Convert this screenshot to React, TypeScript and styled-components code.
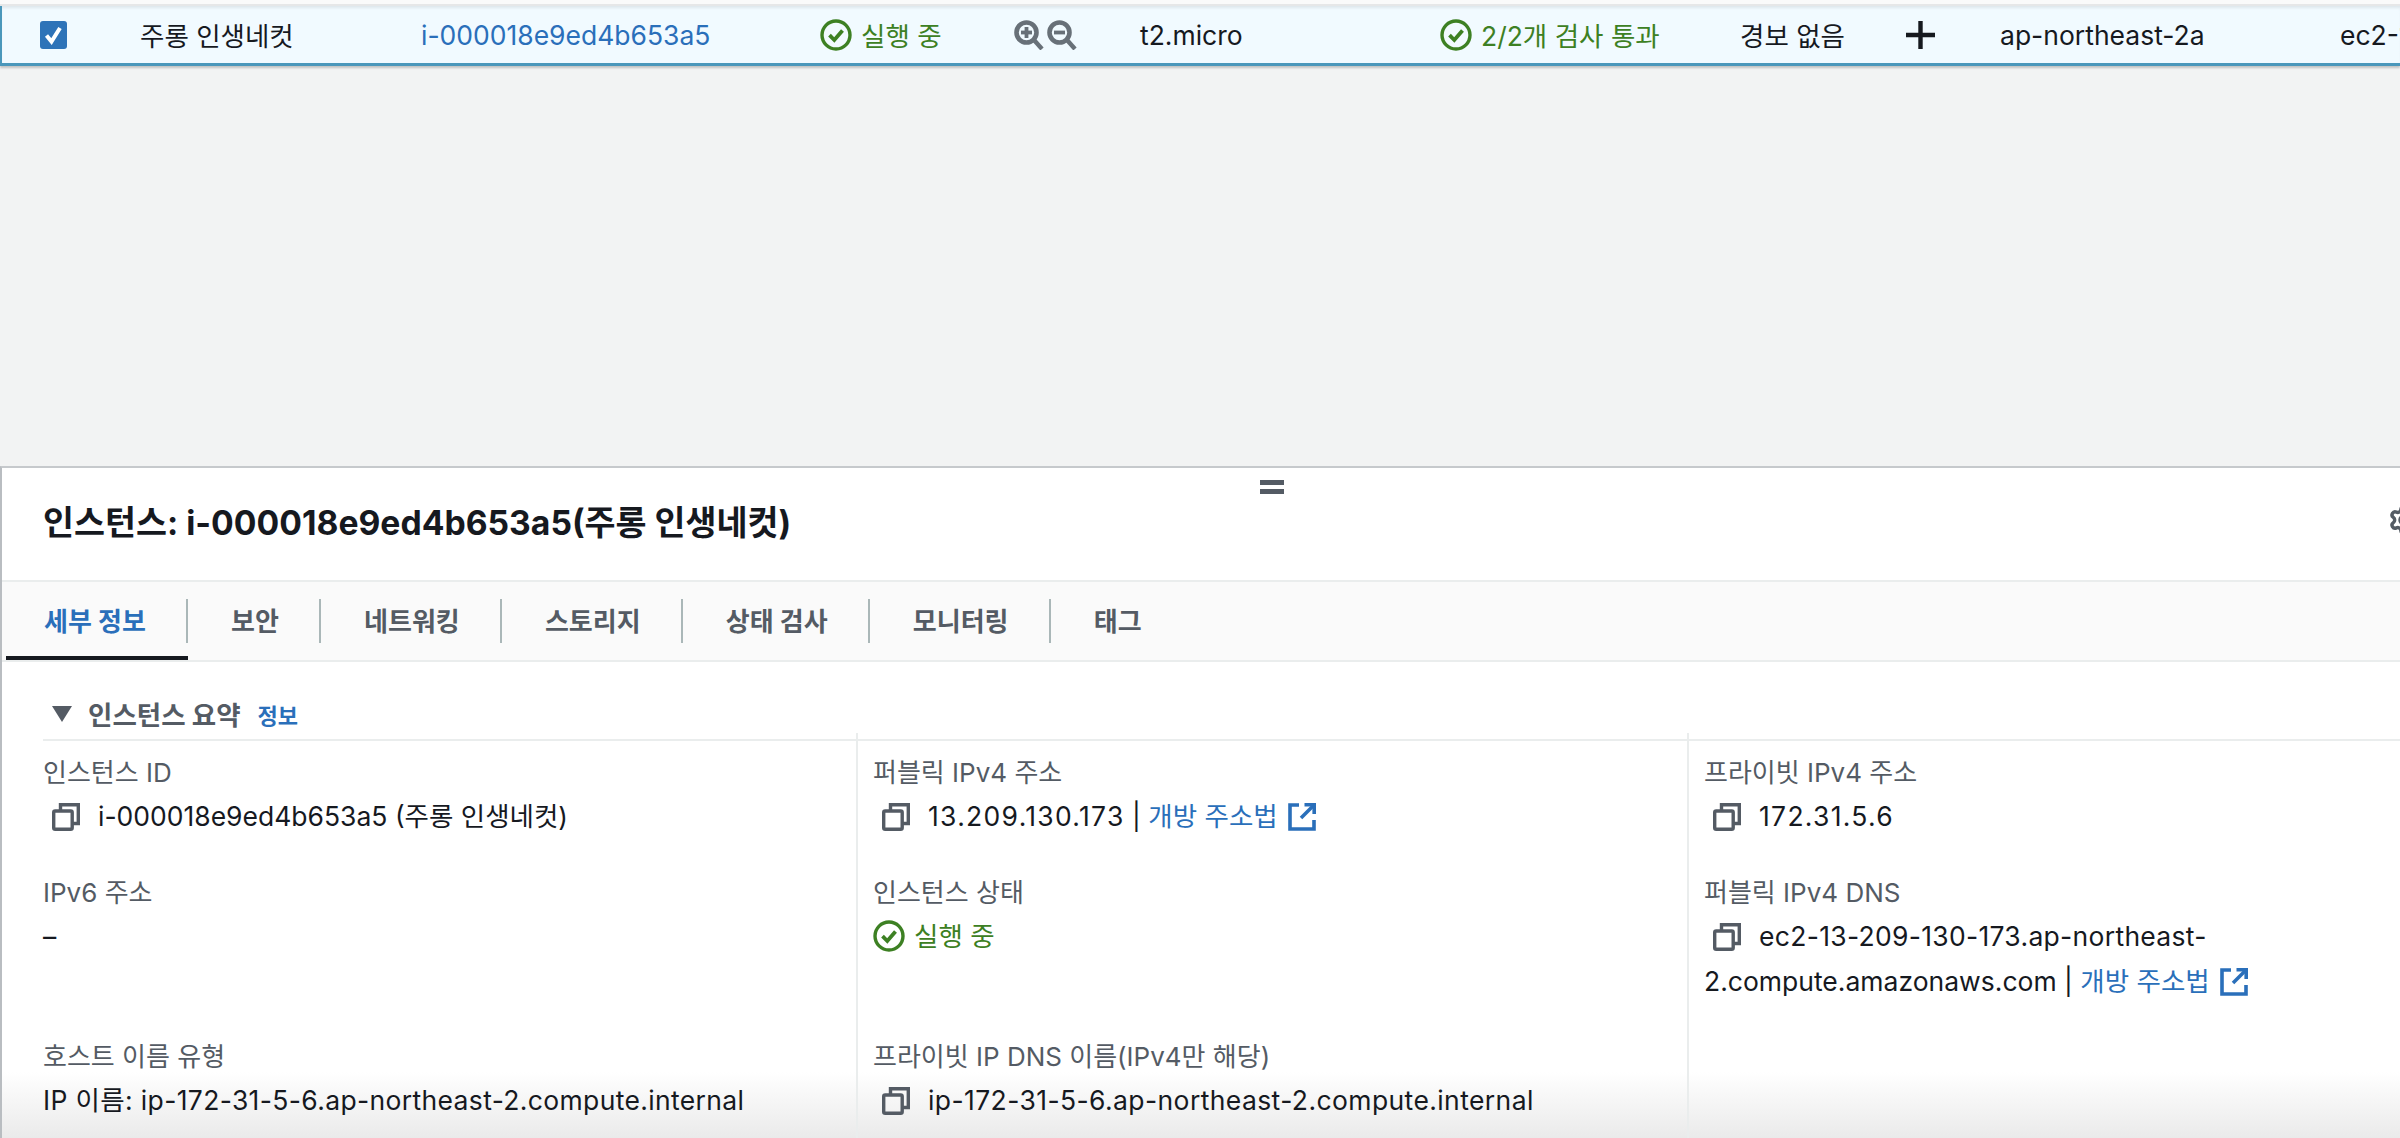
import styled, { createGlobalStyle } from "styled-components";
import { FC } from "react";
import { Settings } from "lucide-react";

const FONT = `Inter, "Noto Sans CJK KR", sans-serif`;

const CopyIcon: FC = () => (
  <CopySvg viewBox="0 0 28 28" fill="none" stroke="#545b64" strokeWidth="3.4">
    <rect x="1.7" y="8" width="18.5" height="18.3" rx="1.5" />
    <path d="M8.5 7.5V1.8H26.3V20.5H21" />
  </CopySvg>
);

const ExternalIcon: FC = () => (
  <ExtSvg viewBox="0 0 28 28" fill="none" stroke="#2a6fba" strokeWidth="3.6">
    <path d="M11 2H2V26H26V17" />
    <path d="M13 15L25 3" />
    <path d="M16.5 1.8H26.2V11" />
  </ExtSvg>
);

const StatusIcon: FC = () => (
  <StatusSvg viewBox="0 0 32 32" fill="none" stroke="#3d8023">
    <circle cx="16" cy="16" r="14" strokeWidth="3.4" />
    <path d="M9.5 16.2L14.3 21L22.5 11.5" strokeWidth="3.8" />
  </StatusSvg>
);

const ZoomIcon: FC<{ plus?: boolean }> = ({ plus }) => (
  <ZoomSvg viewBox="0 0 30 30" fill="none" stroke="#687078">
    <circle cx="12.5" cy="12.5" r="10" strokeWidth="4.6" />
    <path d="M20 20L28 29" strokeWidth="4.4" />
    <path d="M7 12.5H18" strokeWidth="3.8" />
    {plus && <path d="M12.5 7V18" strokeWidth="3.8" />}
  </ZoomSvg>
);

const CopyValue: FC<{ children: React.ReactNode }> = ({ children }) => (
  <Value>
    <CopyIcon />
    {children}
  </Value>
);

const OpenAddress: FC = () => (
  <>
    {" | "}
    <Link>개방 주소법</Link>
    <ExternalIcon />
  </>
);

const tabs = ["세부 정보", "보안", "네트워킹", "스토리지", "상태 검사", "모니터링", "태그"];

export default function App() {
  return (
    <>
      <GlobalStyle />
      <Page>
        <TopStrip />
        <SelectedRow>
          <Cell $w={100}>
            <Checkbox viewBox="0 0 27 28">
              <rect width="27" height="28" rx="3" fill="#2e73b8" />
              <path d="M6.5 14.5L11.5 20.5L20 7" fill="none" stroke="#fff" strokeWidth="4" />
            </Checkbox>
          </Cell>
          <Cell $w={281}>주롱 인생네컷</Cell>
          <Cell $w={399}>
            <Link>i-000018e9ed4b653a5</Link>
          </Cell>
          <Cell $w={193}>
            <Status>
              <StatusIcon />
              실행 중
            </Status>
          </Cell>
          <Cell $w={127}>
            <ZoomIcons>
              <ZoomIcon plus />
              <ZoomIcon />
            </ZoomIcons>
          </Cell>
          <Cell $w={300}>t2.micro</Cell>
          <Cell $w={300}>
            <Status>
              <StatusIcon />
              2/2개 검사 통과
            </Status>
          </Cell>
          <Cell $w={166}>경보 없음</Cell>
          <Cell $w={94}>
            <PlusIcon viewBox="0 0 29 28" stroke="#16191f" strokeWidth="4.4">
              <path d="M0 14H29M14.5 0V28" />
            </PlusIcon>
          </Cell>
          <Cell $w={340}>ap-northeast-2a</Cell>
          <Cell $w={200}>ec2-13-209-130-173</Cell>
        </SelectedRow>
        <Gutter />
        <Panel>
          <Grip />
          <PanelHeader>
            <Title>인스턴스: i-000018e9ed4b653a5(주롱 인생네컷)</Title>
            <Gear>
              <Settings size={32} color="#545b64" strokeWidth={2.6} />
            </Gear>
          </PanelHeader>
          <TabBar>
            {tabs.map((t, i) => (
              <Tab key={t} $active={i === 0}>
                {t}
              </Tab>
            ))}
          </TabBar>
          <Summary>
            <SectionHeader>
              <Caret viewBox="0 0 20 16">
                <polygon points="0,0 20,0 10,16" fill="#545b64" />
              </Caret>
              <SectionTitle>인스턴스 요약</SectionTitle>
              <InfoLink>정보</InfoLink>
            </SectionHeader>
            <FieldGrid>
              <Field>
                <Label>인스턴스 ID</Label>
                <CopyValue>i-000018e9ed4b653a5 (주롱 인생네컷)</CopyValue>
              </Field>
              <Field $divider $tick>
                <Label>퍼블릭 IPv4 주소</Label>
                <CopyValue>
                  <Spaced $ls={1.3}>13.209.130.173</Spaced>
                  <OpenAddress />
                </CopyValue>
              </Field>
              <Field $divider $tick>
                <Label>프라이빗 IPv4 주소</Label>
                <CopyValue>
                  <Spaced $ls={1.3}>172.31.5.6</Spaced>
                </CopyValue>
              </Field>
              <Field>
                <Label>IPv6 주소</Label>
                <Value>–</Value>
              </Field>
              <Field $divider>
                <Label>인스턴스 상태</Label>
                <Value>
                  <Status>
                    <StatusIcon />
                    실행 중
                  </Status>
                </Value>
              </Field>
              <Field $divider>
                <Label>퍼블릭 IPv4 DNS</Label>
                <WrappedValue>
                  <CopyIcon />
                  <Spaced $ls={0.3}>ec2-13-209-130-173.ap-northeast-</Spaced>
                  2.compute.amazonaws.com
                  <OpenAddress />
                </WrappedValue>
              </Field>
              <Field>
                <Label>호스트 이름 유형</Label>
                <Value>
                  <Spaced $ls={0.35}>IP 이름: ip-172-31-5-6.ap-northeast-2.compute.internal</Spaced>
                </Value>
              </Field>
              <Field $divider>
                <Label>프라이빗 IP DNS 이름(IPv4만 해당)</Label>
                <CopyValue>
                  <Spaced $ls={0.4}>ip-172-31-5-6.ap-northeast-2.compute.internal</Spaced>
                </CopyValue>
              </Field>
              <Field $divider />
            </FieldGrid>
          </Summary>
        </Panel>
      </Page>
    </>
  );
}

const GlobalStyle = createGlobalStyle`
  html, body {
    margin: 0;
    padding: 0;
    height: 100%;
    overflow: hidden;
  }
  #root {
    height: 100%;
  }
  * {
    box-sizing: border-box;
  }
`;

const Page = styled.div`
  height: 100vh;
  display: flex;
  flex-direction: column;
  background: #f2f3f3;
  color: #16191f;
  font-family: ${FONT};
  font-size: 26.5px;
  overflow: hidden;
`;

const TopStrip = styled.div`
  height: 6px;
  flex: none;
  background: #fafafa;
  border-bottom: 2px solid #e6e7e8;
`;

const SelectedRow = styled.div`
  height: 60px;
  flex: none;
  display: flex;
  align-items: center;
  padding-left: 38px;
  background: #f1faff;
  border-left: 2px solid #4a97bb;
  border-bottom: 3px solid #4a97bb;
  box-shadow: 0 2px 2px rgba(0, 0, 0, 0.2), inset 0 3px 3px -1px rgba(0, 0, 0, 0.08);
  white-space: nowrap;
`;

const Cell = styled.div<{ $w: number }>`
  flex: none;
  width: ${(p) => p.$w}px;
  display: flex;
  align-items: center;
`;

const Checkbox = styled.svg`
  width: 27px;
  height: 28px;
`;

const Link = styled.span`
  color: #2a6fba;
`;

const Spaced = styled.span<{ $ls: number }>`
  letter-spacing: ${(p) => p.$ls}px;
`;

const Status = styled.span`
  display: inline-flex;
  align-items: center;
  gap: 9px;
  color: #3d8023;
`;

const StatusSvg = styled.svg`
  width: 32px;
  height: 32px;
  flex: none;
`;

const ZoomIcons = styled.div`
  display: flex;
  gap: 3px;
  margin-left: 1px;
`;

const ZoomSvg = styled.svg`
  width: 30px;
  height: 30px;
`;

const PlusIcon = styled.svg`
  width: 29px;
  height: 28px;
`;

const Gutter = styled.div`
  flex: 1;
`;

const Panel = styled.div`
  position: relative;
  height: 672px;
  flex: none;
  background: linear-gradient(#fff calc(100% - 66px), #eaeaea);
  border-top: 2px solid #c6c9cc;
  border-left: 2px solid #b9bdc1;
  overflow: hidden;
`;

const Grip = styled.div`
  position: absolute;
  left: 1258px;
  top: 12px;
  width: 24px;
  height: 14px;
  border-top: 5px solid #545b64;
  border-bottom: 5px solid #545b64;
`;

const PanelHeader = styled.div`
  height: 112px;
  display: flex;
  align-items: center;
  justify-content: space-between;
  padding: 0 0 8px 41px;
`;

const Title = styled.h1`
  margin: 0;
  font-size: 33.7px;
  font-weight: 700;
  white-space: nowrap;
`;

const Gear = styled.div`
  margin-right: -20px;
  display: flex;
`;

const TabBar = styled.div`
  height: 82px;
  display: flex;
  align-items: center;
  padding-left: 4px;
  background: #fafafa;
  border-top: 2px solid #eaeded;
  border-bottom: 2px solid #eaeded;
`;

const Tab = styled.div<{ $active?: boolean }>`
  position: relative;
  height: 100%;
  display: flex;
  align-items: center;
  padding: 0 42.6px 3px ${(p) => (p.$active ? 38 : 42.6)}px;
  font-weight: 700;
  font-size: 26px;
  color: ${(p) => (p.$active ? "#2a6fba" : "#545b64")};
  box-shadow: ${(p) => (p.$active ? "inset 0 -4px 0 #16191f" : "none")};
  &:not(:last-child)::after {
    content: "";
    position: absolute;
    right: 0;
    top: 17px;
    height: 44px;
    width: 2px;
    background: #aab7b8;
  }
`;

const Summary = styled.div`
  padding-left: 41px;
`;

const SectionHeader = styled.div`
  height: 79px;
  display: flex;
  align-items: center;
  padding: 26px 0 0 9px;
  border-bottom: 2px solid #eaeded;
`;

const Caret = styled.svg`
  width: 20px;
  height: 16px;
  margin-right: 16px;
`;

const SectionTitle = styled.span`
  font-size: 26.5px;
  font-weight: 700;
  color: #545b64;
`;

const InfoLink = styled.span`
  margin-left: 17px;
  font-size: 22px;
  font-weight: 700;
  color: #2a6fba;
`;

const FieldGrid = styled.div`
  display: grid;
  grid-template-columns: 813px 831px 1fr;
  grid-template-rows: 120px 164px 140px;
`;

const Field = styled.div<{ $divider?: boolean; $tick?: boolean }>`
  position: relative;
  padding: 15px 0 0 ${(p) => (p.$divider ? 15 : 0)}px;
  border-left: ${(p) => (p.$divider ? "2px solid #eaeded" : "none")};
  &::before {
    content: ${(p) => (p.$tick ? '""' : "none")};
    position: absolute;
    left: -2px;
    top: -8px;
    width: 2px;
    height: 6px;
    background: #eaeded;
  }
`;

const Label = styled.div`
  height: 34px;
  line-height: 34px;
  margin-bottom: 4px;
  font-size: 26px;
  color: #545b64;
`;

const Value = styled.div`
  line-height: 44px;
  white-space: nowrap;
`;

const WrappedValue = styled.div`
  line-height: 45px;
  max-width: 640px;
`;

const CopySvg = styled.svg`
  width: 28px;
  height: 28px;
  margin: 0 18px 0 9px;
  vertical-align: -5px;
`;

const ExtSvg = styled.svg`
  width: 28px;
  height: 28px;
  margin-left: 10px;
  vertical-align: -5px;
`;
